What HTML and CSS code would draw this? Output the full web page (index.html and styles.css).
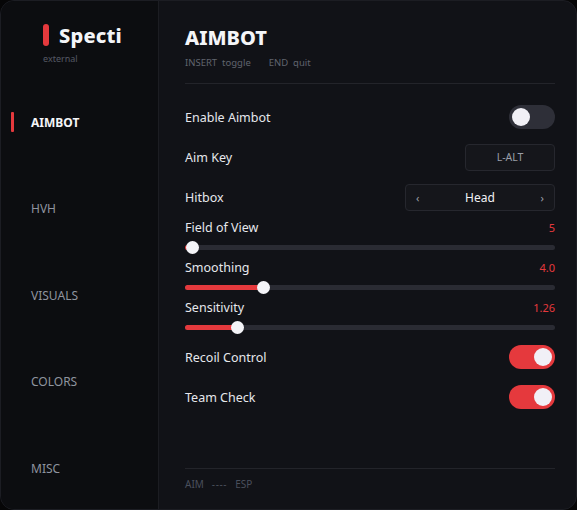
FILE: index.html
```html
<!DOCTYPE html>
<html lang="en">
<head>
    <meta charset="UTF-8">
    <meta name="viewport" content="width=device-width, initial-scale=1.0">
    <title>Specti</title>
    <link rel="stylesheet" href="styles.css">
</head>
<body>
    <div class="window">
        <!-- Sidebar -->
        <div class="sidebar">
            <div class="logo">
                <span class="logo-bar"></span>
                <span class="logo-name">Specti</span>
            </div>
            <div class="logo-sub">external</div>

            <ul class="nav">
                <li class="active"><span class="marker"></span>AIMBOT</li>
                <li><span class="marker"></span>HVH</li>
                <li><span class="marker"></span>VISUALS</li>
                <li><span class="marker"></span>COLORS</li>
                <li><span class="marker"></span>MISC</li>
            </ul>
        </div>

        <!-- Main panel -->
        <div class="main">
            <div class="header">
                <h1>AIMBOT</h1>
                <div class="hint">INSERT&nbsp; toggle <span class="gap"></span> END&nbsp; quit</div>
            </div>

            <div class="options">
                <div class="row">
                    <span class="label">Enable Aimbot</span>
                    <span class="toggle"><span class="knob"></span></span>
                </div>
                <div class="row">
                    <span class="label">Aim Key</span>
                    <span class="keybind">L-ALT</span>
                </div>
                <div class="row">
                    <span class="label">Hitbox</span>
                    <span class="select">
                        <span class="arrow">&lsaquo;</span>
                        <span class="select-value">Head</span>
                        <span class="arrow">&rsaquo;</span>
                    </span>
                </div>

                <div class="slider-group">
                    <div class="slider-head">
                        <span class="label">Field of View</span>
                        <span class="value">5</span>
                    </div>
                    <div class="slider">
                        <div class="track"><div class="fill" style="width: 2%"></div><span class="thumb"></span></div>
                    </div>
                </div>
                <div class="slider-group">
                    <div class="slider-head">
                        <span class="label">Smoothing</span>
                        <span class="value">4.0</span>
                    </div>
                    <div class="slider">
                        <div class="track"><div class="fill" style="width: 21%"></div><span class="thumb"></span></div>
                    </div>
                </div>
                <div class="slider-group">
                    <div class="slider-head">
                        <span class="label">Sensitivity</span>
                        <span class="value">1.26</span>
                    </div>
                    <div class="slider">
                        <div class="track"><div class="fill" style="width: 14%"></div><span class="thumb"></span></div>
                    </div>
                </div>

                <div class="row">
                    <span class="label">Recoil Control</span>
                    <span class="toggle on"><span class="knob"></span></span>
                </div>
                <div class="row">
                    <span class="label">Team Check</span>
                    <span class="toggle on"><span class="knob"></span></span>
                </div>
            </div>

            <div class="footer"><span>AIM</span><span class="dashes">----</span><span>ESP</span></div>
        </div>
    </div>
</body>
</html>
```

FILE: styles.css
```css
* {
    box-sizing: border-box;
}

html, body {
    margin: 0;
    height: 100%;
    background-color: #060607;
}

body {
    font-family: "Noto Sans", "Open Sans", sans-serif;
    color: #e6e7ec;
}

.window {
    display: flex;
    width: 577px;
    height: 510px;
    border: 1px solid #1c1d23;
    border-radius: 14px;
    overflow: hidden;
    background-color: #111217;
}

/* Sidebar */
.sidebar {
    width: 158px;
    flex-shrink: 0;
    background-color: #0c0d10;
    border-right: 1px solid #1c1d22;
    padding-top: 23px;
}

.logo {
    display: flex;
    align-items: center;
    padding-left: 42px;
    height: 22px;
}

.logo-bar {
    width: 6px;
    height: 22px;
    border-radius: 3px;
    background-color: #e5393d;
    margin-right: 10px;
}

.logo-name {
    font-size: 20px;
    font-weight: 800;
    color: #f4f5f8;
    letter-spacing: 0.2px;
}

.logo-sub {
    padding-left: 42px;
    margin-top: 7px;
    font-size: 9px;
    line-height: 12px;
    color: #555965;
}

.nav {
    list-style: none;
    margin: 47px 0 0;
    padding: 0;
    display: flex;
    flex-direction: column;
    gap: 66.5px;
}

.nav li {
    display: flex;
    align-items: center;
    height: 20px;
    padding-left: 10px;
    font-size: 12px;
    color: #8f949f;
}

.nav .marker {
    width: 3px;
    height: 20px;
    border-radius: 1px;
    margin-right: 17px;
}

.nav li.active {
    color: #f4f5f8;
    font-weight: 700;
}

.nav li.active .marker {
    background-color: #e5393d;
}

/* Main */
.main {
    flex: 1;
    display: flex;
    flex-direction: column;
    padding: 24px 21px 18px 26px;
}

.header {
    border-bottom: 1px solid #23242a;
    padding-bottom: 13px;
}

.header h1 {
    margin: 0;
    font-size: 20px;
    line-height: 26px;
    font-weight: 800;
    color: #f4f5f8;
}

.hint {
    margin-top: 5px;
    font-size: 9.5px;
    line-height: 14px;
    color: #60646e;
}

.hint .gap {
    display: inline-block;
    width: 13px;
}

.options {
    padding-top: 13px;
}

.row {
    display: flex;
    align-items: center;
    justify-content: space-between;
    height: 40px;
}

.label {
    font-size: 12.5px;
    color: #e6e7ec;
}

.toggle {
    display: flex;
    align-items: center;
    width: 46px;
    height: 24px;
    border-radius: 12px;
    background-color: #2e2f38;
    padding: 0 3px;
}

.toggle .knob {
    width: 18px;
    height: 18px;
    border-radius: 50%;
    background-color: #f1f0f6;
}

.toggle.on {
    background-color: #e5393d;
    justify-content: flex-end;
}

.keybind {
    width: 90px;
    height: 27px;
    display: flex;
    align-items: center;
    justify-content: center;
    border: 1px solid #26272e;
    border-radius: 4px;
    background-color: #15161b;
    font-size: 10.5px;
    color: #9a9ea8;
}

.select {
    width: 150px;
    height: 27px;
    display: flex;
    align-items: center;
    justify-content: space-between;
    padding: 0 10px;
    border: 1px solid #26272e;
    border-radius: 4px;
    background-color: #15161b;
}

.select .arrow {
    font-size: 11px;
    color: #9a9ea8;
}

.select-value {
    font-size: 12px;
    color: #f0f1f5;
}

.slider-group {
    height: 40px;
}

.slider-head {
    display: flex;
    justify-content: space-between;
    align-items: center;
    height: 20px;
}

.value {
    font-size: 11px;
    color: #e5393d;
}

.slider {
    height: 20px;
    display: flex;
    align-items: center;
}

.track {
    position: relative;
    width: 100%;
    height: 5px;
    border-radius: 3px;
    background-color: #2a2b33;
    display: flex;
    align-items: center;
}

.fill {
    height: 5px;
    border-radius: 3px;
    background-color: #e5393d;
}

.thumb {
    width: 13px;
    height: 13px;
    border-radius: 50%;
    background-color: #f4f4f8;
    margin-left: -6px;
    flex-shrink: 0;
}

.footer {
    margin-top: auto;
    border-top: 1px solid #23242a;
    padding-top: 8px;
    display: flex;
    gap: 8px;
    font-size: 10px;
    line-height: 14px;
    color: #4a4f5c;
}

.footer .dashes {
    letter-spacing: 0.6px;
}
```
